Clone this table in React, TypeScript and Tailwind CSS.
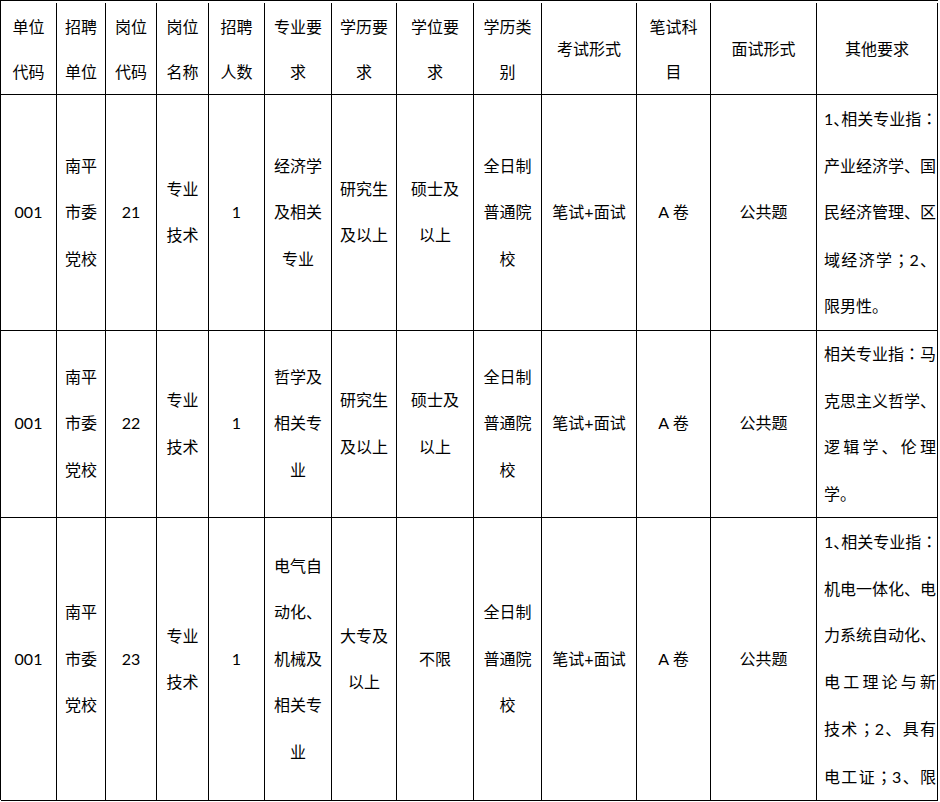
import type { ReactElement, ReactNode } from "react";

type Row = {
	cells: string[][];
	other: string[];
	otherLastIsEnd: boolean;
};

const header: string[][] = [
	["单位", "代码"],
	["招聘", "单位"],
	["岗位", "代码"],
	["岗位", "名称"],
	["招聘", "人数"],
	["专业要", "求"],
	["学历要", "求"],
	["学位要", "求"],
	["学历类", "别"],
	["考试形式"],
	["笔试科", "目"],
	["面试形式"],
	["其他要求"],
];

const rows: Row[] = [
	{
		cells: [
			["001"],
			["南平", "市委", "党校"],
			["21"],
			["专业", "技术"],
			["1"],
			["经济学", "及相关", "专业"],
			["研究生", "及以上"],
			["硕士及", "以上"],
			["全日制", "普通院", "校"],
			["笔试+面试"],
			["A 卷"],
			["公共题"],
		],
		other: ["1、相关专业指：", "产业经济学、国", "民经济管理、区", "域经济学；2、", "限男性。"],
		otherLastIsEnd: true,
	},
	{
		cells: [
			["001"],
			["南平", "市委", "党校"],
			["22"],
			["专业", "技术"],
			["1"],
			["哲学及", "相关专", "业"],
			["研究生", "及以上"],
			["硕士及", "以上"],
			["全日制", "普通院", "校"],
			["笔试+面试"],
			["A 卷"],
			["公共题"],
		],
		other: ["相关专业指：马", "克思主义哲学、", "逻辑学、伦理", "学。"],
		otherLastIsEnd: true,
	},
	{
		cells: [
			["001"],
			["南平", "市委", "党校"],
			["23"],
			["专业", "技术"],
			["1"],
			["电气自", "动化、", "机械及", "相关专", "业"],
			["大专及", "以上"],
			["不限"],
			["全日制", "普通院", "校"],
			["笔试+面试"],
			["A 卷"],
			["公共题"],
		],
		other: [
			"1、相关专业指：",
			"机电一体化、电",
			"力系统自动化、",
			"电工理论与新",
			"技术；2、具有",
			"电工证；3、限",
		],
		otherLastIsEnd: false,
	},
];

const cols =
	"grid grid-cols-[56px_49px_51px_52px_56px_67px_65px_77px_68px_95px_74px_106px_121px]";

const cellBase = "flex items-center justify-center border-r border-b border-black text-center";

// colons / semicolons sit centred in the source font, the TC face draws them that way
function renderPunct(text: string, keyBase: string): ReactNode[] {
	return text.split(/([：；])/).map((part, i) =>
		part === "：" || part === "；" ? (
			<span key={`${keyBase}-${i}`} style={{ fontFamily: "'Noto Sans CJK TC', sans-serif" }}>
				{part}
			</span>
		) : (
			part
		),
	);
}

// the numbered lead-in has its comma squeezed to half width, as in the source doc
function renderLine(line: string): ReactNode {
	if (line.startsWith("1、")) {
		return (
			<>
				1<span className="[font-feature-settings:'halt']">、</span>
				{renderPunct(line.slice(2), "a")}
			</>
		);
	}

	return renderPunct(line, "b");
}

function CenterCell({ lines, leading }: { lines: string[]; leading: string }): ReactElement {
	return (
		<div className={cellBase}>
			<div className={leading}>
				{lines.map((line, i) => (
					<div key={i} className="whitespace-nowrap">
						{line}
					</div>
				))}
			</div>
		</div>
	);
}

function OtherCell({ lines, lastIsEnd }: { lines: string[]; lastIsEnd: boolean }): ReactElement {
	return (
		<div className="flex items-center border-r border-b border-black pl-[7px] pr-px">
			<div className="w-full leading-[46.5px]">
				{lines.map((line, i) => {
					const isLast = lastIsEnd && i === lines.length - 1;

					return (
						<div
							key={i}
							className={
								isLast
									? "whitespace-nowrap text-left"
									: "whitespace-nowrap text-justify [text-align-last:justify]"
							}
						>
							{renderLine(line)}
						</div>
					);
				})}
			</div>
		</div>
	);
}

export default function App(): ReactElement {
	return (
		<div
			className="h-[802px] w-[940px] overflow-hidden bg-white text-[16px] text-black"
			style={{ fontFamily: "Lato, 'Noto Sans CJK SC', sans-serif" }}
		>
			<div className="grid w-[938px] border-l border-t border-black">
				<div className={`${cols} h-[94px] pt-[2px]`}>
					{header.map((lines, i) => (
						<CenterCell key={i} lines={lines} leading="leading-[45px]" />
					))}
				</div>
				{rows.map((row, r) => (
					<div
						key={r}
						className={[cols, r === 0 ? "h-[235px]" : r === 1 ? "h-[188px]" : "h-[282px]"].join(
							" ",
						)}
					>
						{row.cells.map((lines, i) => (
							<CenterCell key={i} lines={lines} leading="leading-[46.5px]" />
						))}
						<OtherCell lines={row.other} lastIsEnd={row.otherLastIsEnd} />
					</div>
				))}
			</div>
		</div>
	);
}
